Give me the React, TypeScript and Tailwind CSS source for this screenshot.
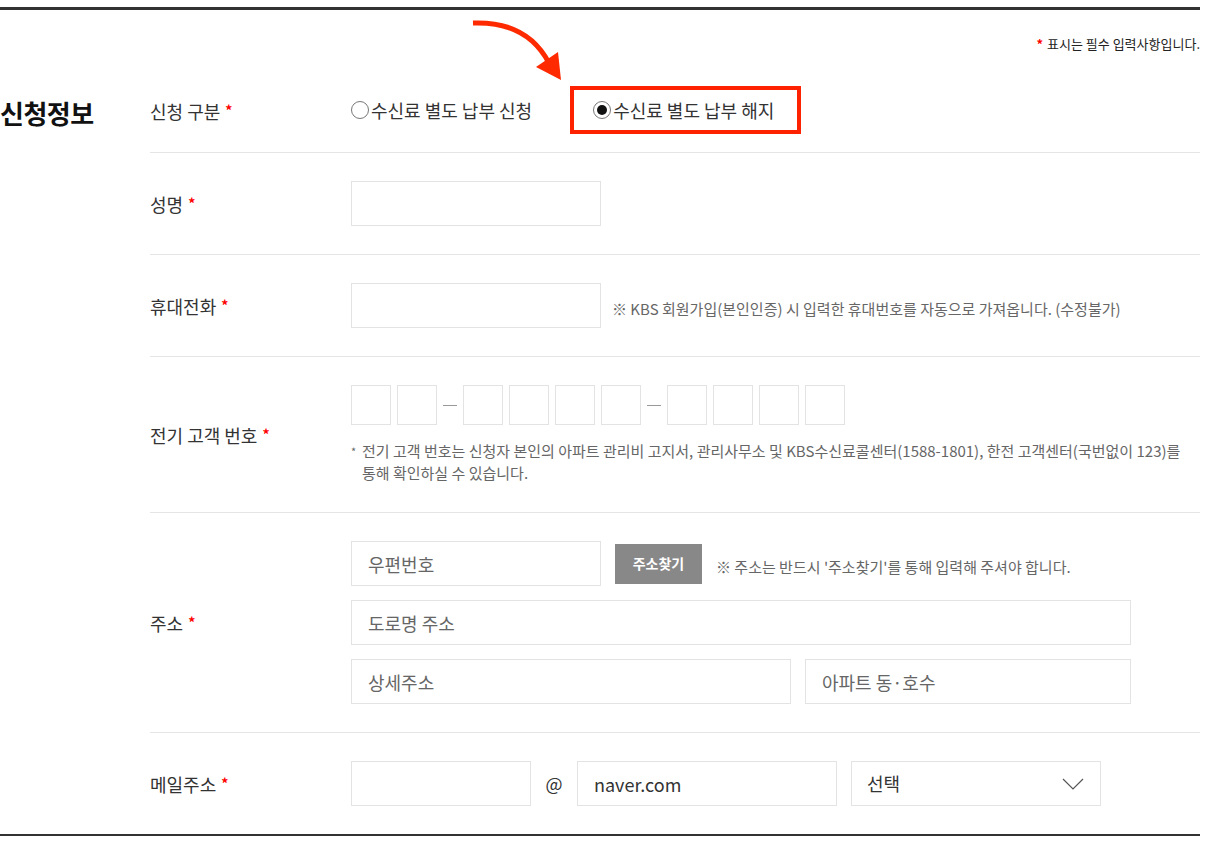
import React from "react";

const Star = () => <span className="ml-[5px] text-[#ff0000] text-[14px] font-bold align-[3px]">*</span>;

function Label({ children }: { children: React.ReactNode }) {
  return (
    <div className="w-[201px] shrink-0 text-[18px] leading-[24px] text-[#333]">
      {children}
      <Star />
    </div>
  );
}

function Row({ children, last = false, className = "" }: { children: React.ReactNode; last?: boolean; className?: string }) {
  return (
    <div className={`flex items-center ${last ? "" : "border-b border-[#e5e5e5]"} ${className}`}>
      {children}
    </div>
  );
}

const inputCls =
  "h-[45px] border border-[#e3e3e3] bg-white px-[16px] text-[18px] text-[#333] placeholder:text-[#666] outline-none";

function Box() {
  return <div className="w-[40px] h-[40px] border border-[#e3e3e3] bg-white" />;
}
function Dash() {
  return (
    <div className="w-[14px] flex items-center">
      <div className="w-full h-px bg-[#999]" />
    </div>
  );
}

function Radio({ checked }: { checked?: boolean }) {
  return (
    <span className="w-[18px] h-[18px] rounded-full border border-[#777] bg-white flex items-center justify-center shrink-0">
      {checked && <span className="w-[10px] h-[10px] rounded-full bg-[#111]" />}
    </span>
  );
}

export default function App() {
  return (
    <div className="relative w-[1200px] pt-[7px] bg-white font-['Noto_Sans_CJK_KR','Noto_Sans',sans-serif] text-[#333]">
      <svg
        className="absolute left-0 top-0 pointer-events-none"
        width="1224"
        height="100"
        viewBox="0 0 1224 100"
      >
        <path d="M473 23 Q527 21 549 63" stroke="#ff2a00" strokeWidth="5" fill="none" />
        <polygon points="536,67 558,52 561,80" fill="#ff2a00" />
      </svg>

      <div className="border-t-[3px] border-b-2 border-[#333]">
        <div className="flex justify-end pt-[26px] text-[13px] leading-[16px] text-[#222]">
          <span className="text-[#ff0000] mr-[4px] font-bold">*</span>
          <span>표시는 필수 입력사항입니다.</span>
        </div>

        <div className="flex">
          <div className="w-[150px] shrink-0 pt-[45px]">
            <h2 className="text-[26px] leading-[32px] font-bold text-[#111] tracking-[-0.5px]">신청정보</h2>
          </div>

          <div className="flex-1">
            {/* 신청 구분 */}
            <Row className="pt-[34px] pb-[18px]">
              <Label>신청 구분</Label>
              <div className="flex items-center">
                <label className="flex items-center gap-[2px] text-[18px] leading-[24px] text-[#333]">
                  <Radio />
                  <span>수신료 별도 납부 신청</span>
                </label>
                <label className="ml-[38px] h-[48px] flex items-center gap-[2px] border-4 border-[#ff2200] pl-[19px] pr-[23px] text-[18px] leading-[24px] text-[#333]">
                  <Radio checked />
                  <span>수신료 별도 납부 해지</span>
                </label>
              </div>
            </Row>

            {/* 성명 */}
            <Row className="py-[28px]">
              <Label>성명</Label>
              <input className={`${inputCls} w-[250px]`} />
            </Row>

            {/* 휴대전화 */}
            <Row className="py-[28px]">
              <Label>휴대전화</Label>
              <input className={`${inputCls} w-[250px]`} />
              <span className="ml-[11px] mt-[8px] text-[15px] text-[#666]">
                ※ KBS 회원가입(본인인증) 시 입력한 휴대번호를 자동으로 가져옵니다. (수정불가)
              </span>
            </Row>

            {/* 전기 고객 번호 */}
            <Row className="pt-[28px] pb-[28px]">
              <Label>전기 고객 번호</Label>
              <div className="flex flex-col">
                <div className="flex gap-[6px]">
                  <Box />
                  <Box />
                  <Dash />
                  <Box />
                  <Box />
                  <Box />
                  <Box />
                  <Dash />
                  <Box />
                  <Box />
                  <Box />
                  <Box />
                </div>
                <div className="mt-[15px] flex text-[15px] leading-[22px] text-[#666] whitespace-nowrap">
                  <span className="w-[11px] shrink-0 text-[11px]">*</span>
                  <span>
                    전기 고객 번호는 신청자 본인의 아파트 관리비 고지서, 관리사무소 및 KBS수신료콜센터(1588-1801), 한전 고객센터(국번없이 123)를
                    <br />
                    통해 확인하실 수 있습니다.
                  </span>
                </div>
              </div>
            </Row>

            {/* 주소 */}
            <Row className="py-[28px]">
              <Label>주소</Label>
              <div className="flex flex-col gap-[14px]">
                <div className="flex items-center">
                  <input className={`${inputCls} w-[250px]`} placeholder="우편번호" />
                  <button className="ml-[14px] w-[87px] h-[40px] bg-[#888] text-white text-[14px] font-bold">
                    주소찾기
                  </button>
                  <span className="ml-[14px] mt-[8px] text-[15px] text-[#666]">
                    ※ 주소는 반드시 '주소찾기'를 통해 입력해 주셔야 합니다.
                  </span>
                </div>
                <input className={`${inputCls} w-[780px]`} placeholder="도로명 주소" />
                <div className="flex gap-[14px]">
                  <input className={`${inputCls} w-[440px]`} placeholder="상세주소" />
                  <input className={`${inputCls} w-[326px]`} placeholder="아파트 동·호수" />
                </div>
              </div>
            </Row>

            {/* 메일주소 */}
            <Row last className="py-[28px]">
              <Label>메일주소</Label>
              <div className="flex items-center">
                <input className={`${inputCls} w-[180px]`} />
                <span className="w-[46px] text-center text-[18px] text-[#333]">@</span>
                <input className={`${inputCls} w-[260px]`} defaultValue="naver.com" />
                <div className="ml-[14px] w-[250px] h-[45px] border border-[#e3e3e3] flex items-center justify-between pl-[15px] pr-[16px] text-[18px] text-[#333]">
                  <span>선택</span>
                  <svg width="22" height="12" viewBox="0 0 22 12">
                    <polyline points="1,1 11,11 21,1" fill="none" stroke="#555" strokeWidth="1.2" />
                  </svg>
                </div>
              </div>
            </Row>
          </div>
        </div>
      </div>
    </div>
  );
}
